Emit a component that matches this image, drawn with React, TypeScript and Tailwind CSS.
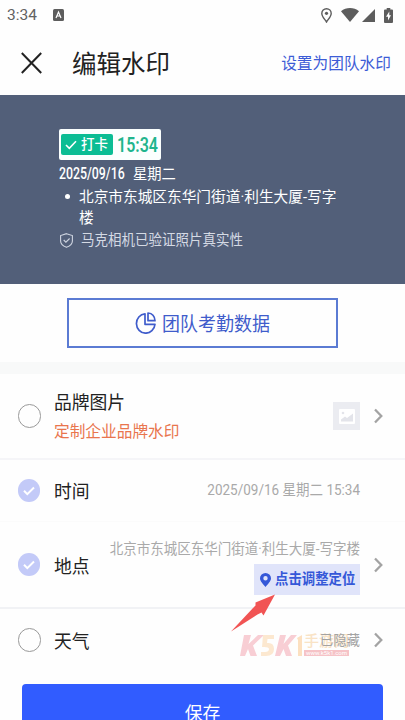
import React from "react";

const CJK = "font-['Roboto','Noto_Sans_CJK_SC',sans-serif]";

function Radio({ checked }: { checked?: boolean }) {
  return checked ? (
    <span className="flex h-[23px] w-[22px] shrink-0 items-center justify-center rounded-full bg-[#c3caf8]">
      <svg width="12" height="10" viewBox="0 0 12 10" fill="none" stroke="#fff" strokeWidth="2">
        <path d="M1 4.8 4.3 8.2 11 1.5" />
      </svg>
    </span>
  ) : (
    <span className="h-6 w-[23px] shrink-0 rounded-full border border-[#999]" />
  );
}

function Chevron() {
  return (
    <svg className="shrink-0" width="9" height="16" viewBox="0 0 9 16" fill="none" stroke="#a3a3a3" strokeWidth="2.3">
      <path d="M1 1.500 7.300 8 1 14.500" />
    </svg>
  );
}

function StatusBar() {
  return (
    <div className="flex h-[30px] items-center pl-[7px] pr-3 text-[15.5px] text-[#626262]">
      <span className="w-[46px] pt-px">3:34</span>
      <svg width="11" height="12" viewBox="0 0 11 12">
        <rect width="11" height="12" rx="1.5" fill="#5d5d5d" />
        <path d="M3 9 5.5 3 8 9M4 7h3" fill="none" stroke="#fff" strokeWidth="1.2" />
      </svg>
      <div className="flex-1" />
      <svg width="11" height="15" viewBox="0 0 11 15" fill="none" stroke="#5d5d5d" strokeWidth="1.4">
        <path d="M5.5 14C3.3 10.7.8 8.2.8 5.4a4.7 4.7 0 0 1 9.4 0c0 2.8-2.5 5.3-4.7 8.6Z" />
        <circle cx="5.5" cy="5.3" r="1.6" fill="#5d5d5d" stroke="none" />
      </svg>
      <svg className="ml-[9px]" width="18" height="14" viewBox="0 0 18 14">
        <path d="M0 3.2C5-1 13-1 18 3.2L9 14Z" fill="#5d5d5d" />
      </svg>
      <svg className="ml-[3px]" width="13" height="13" viewBox="0 0 13 13">
        <path d="M13 0V13H0Z" fill="#5d5d5d" />
      </svg>
      <svg className="ml-[9px]" width="9" height="15" viewBox="0 0 9 15">
        <path d="M2.7 0h3.6v1.5H8q1 0 1 1V14q0 1-1 1H1q-1 0-1-1V2.500q0-1 1-1h1.700Z" fill="#5d5d5d" />
        <path d="M5.300 3.500 2 8.700h2v3.800L7 7.300H5.300Z" fill="#fff" />
      </svg>
    </div>
  );
}

function Preview() {
  return (
    <section className="h-[189px] bg-[#525f79] pl-[59px] pt-[34px] text-white">
      <div className="flex h-[31px] w-[102px] items-center rounded-[2px] bg-[#fbfffe] pl-[2px]">
        <div className="flex h-[21px] w-[52px] shrink-0 items-center rounded-[2px] bg-[#0bbd94] pl-1">
          <svg width="12" height="10" viewBox="0 0 12 10" fill="none" stroke="#fff" strokeWidth="1.6">
            <path d="M1 5 4.300 8.300 11 1.300" />
          </svg>
          <span className="ml-[4px] pt-px text-[13.500px] font-medium leading-none whitespace-nowrap">打卡</span>
        </div>
        <span className="ml-[4px] origin-left scale-x-[0.8] pt-px text-[20px] font-semibold leading-none text-[#1fb58d]">15:34</span>
      </div>
      <div className="mt-[4px] flex h-[20px] items-center leading-none">
        <span className="w-[74px]">
          <span className="inline-block origin-left scale-x-[0.77] text-[16px] font-medium">2025/09/16</span>
        </span>
        <span className="text-[14.300px]">星期二</span>
      </div>
      <div className="mt-[3px] flex text-[14.680px] leading-5">
        <span className="ml-[6px] mr-[9px] mt-[7px] h-[5px] w-[5px] rounded-full bg-white" />
        <span className="w-[270px] origin-top scale-y-[1.03]">北京市东城区东华门街道·利生大厦-写字<br />楼</span>
      </div>
      <div className="mt-[3px] flex h-5 items-center text-[13.500px] leading-none text-[#d5dae4]">
        <svg className="ml-px mr-[8px]" width="13" height="15" viewBox="0 0 13 15" fill="none" stroke="#cfd5e0" strokeWidth="1.100">
          <path d="M6.500.7 12.400 2.600V8c0 3-2.500 5-5.900 6.300C3.100 13 .6 11 .6 8V2.600Z" />
          <path d="m3.700 7 2.200 2.200L9.600 5.500" />
        </svg>
        <span className="scale-y-[1.06] pt-[2px]">马克相机已验证照片真实性</span>
      </div>
    </section>
  );
}

function Arrow() {
  return (
    <svg className="absolute left-[230px] top-[593px]" width="46" height="40" viewBox="0 0 46 40">
      <path d="M1 38.500 23 15 25.500 12.500 25.500 9.500 45 1.500 33.500 22.500 31.500 19.500 27.500 21.500Z" fill="#f15454" />
    </svg>
  );
}

function SiteMark() {
  return (
    <div className="absolute left-[240px] top-[635px] flex h-[22px] w-[110px]">
      <svg width="64" height="22" viewBox="0 0 64 22">
        <path d="M4 0H11L8.500 9 18 0H24L13 10.500 17 21H10.500L8 14 5 21H0Z" fill="#f8ced4" />
        <path d="M23 0H34V4H27.500L27 8Q34 7 34 14 34 21 26 21H21V17H25Q29 17 29 14 29 11.500 22 12Z" fill="#fce8d0" />
        <path d="M40 0H46L43.500 9 51 0H57L48 10.500 52 21H46L43.500 14 40 21H35Z" fill="#f8ced4" />
        <path d="M57 3 62 0V21H58V5Z" fill="#fce0c0" />
      </svg>
      <div className="flex w-[45px] flex-col">
        <span className="h-[15px] whitespace-nowrap text-[15px] font-medium leading-[13px] text-[#f9e3c5]">手游网</span>
        <span className="flex h-[6px] items-center justify-center bg-[#f6c3c7] text-[6px] leading-none text-white">www.k5k1.com</span>
      </div>
    </div>
  );
}

export default function App() {
  return (
    <main className={`relative h-[720px] w-[405px] overflow-hidden bg-[#fefefe] text-[#222] ${CJK}`}>
      <SiteMark />
      <StatusBar />
      <header className="flex h-[65px] items-center pl-[21px] pr-[14px]">
        <svg width="21" height="22" viewBox="0 0 21 22" fill="none" stroke="#222" strokeWidth="2">
          <path d="m.8 1 19.400 20M20.200 1 .8 21" />
        </svg>
        <h1 className="ml-[30px] flex-1 scale-y-[1.04] pt-[5px] text-[24.500px] leading-none">编辑水印</h1>
        <span className="scale-y-[1.05] pt-[2px] text-[15.700px] leading-none text-[#3d5cd6]">设置为团队水印</span>
      </header>
      <Preview />
      <section className="h-[78px] px-[67px] pt-[14px]">
        <button className="flex h-[50px] w-[271px] items-center justify-center border-2 border-[#5b7bd3] text-[18px] leading-none text-[#3f5ccb]">
          <svg className="mr-[6px]" width="21" height="22" viewBox="0 0 21 22" fill="none" stroke="#3f5ccb" strokeWidth="1.700" strokeLinejoin="round">
            <path d="M10 1.800A9.300 9.700 0 1 0 20 12.300H10Z" />
            <path d="M13 1Q19.500 1.500 20 8.700H13Z" />
          </svg>
          <span className="scale-y-[1.06] pt-[4px]">团队考勤数据</span>
        </button>
      </section>
      <div className="h-3 bg-[#f8f9f9]" />
      <section>
        <div className="flex h-[86px] items-center border-b-2 border-[#f5f5f8] pl-[18px] pr-[22px]">
          <Radio />
          <div className="ml-[13px] flex-1 pt-[3px]">
            <div className="scale-y-[1.05] text-[17.800px] leading-7">品牌图片</div>
            <div className="scale-y-[1.05] text-[15.700px] leading-[30px] text-[#e9754d]">定制企业品牌水印</div>
          </div>
          <span className="mr-[14px] flex h-[28px] w-[27px] items-center justify-center bg-[#ebecf1]">
            <svg width="16" height="15" viewBox="0 0 16 15">
              <rect width="16" height="15" rx="1" fill="#fff" />
              <path d="M2 12.500V10.500L6 7.500 8 9 14 4.500V12.500Z" fill="#e3e4ea" />
              <circle cx="4" cy="4" r="1.300" fill="#e3e4ea" />
            </svg>
          </span>
          <Chevron />
        </div>
        <div className="flex h-[62px] items-center border-b border-[#fbfbfb] pl-[18px] pr-[45px]">
          <Radio checked />
          <span className="ml-[14px] flex-1 scale-y-[1.05] pt-[3px] text-[17.800px] leading-none">时间</span>
          <span className="scale-y-[1.1] pt-px text-[13.500px] leading-none text-[#a9a9a9]">2025/09/16 星期二 15:34</span>
        </div>
        <div className="flex h-[87px] items-center border-b-2 border-[#f1f2f5] pl-[18px] pr-[22px]">
          <Radio checked />
          <span className="ml-[14px] scale-y-[1.05] pt-[4px] text-[17.800px] leading-none">地点</span>
          <div className="mr-[14px] flex flex-1 flex-col items-end">
            <span className="scale-y-[1.06] whitespace-nowrap text-[13.500px] leading-[30px] text-[#a9a9a9]">北京市东城区东华门街道·利生大厦-写字楼</span>
            <span className="flex h-[31px] w-[106px] items-center whitespace-nowrap bg-[#e0e4fa] pl-[6px] text-[13.400px] font-bold leading-none text-[#3558d8]">
              <svg className="mr-[4px] shrink-0" width="11" height="14" viewBox="0 0 11 14">
                <path fillRule="evenodd" d="M5.500 14C3.500 11.500 0 8.500 0 5.300a5.500 5.300 0 0 1 11 0c0 3.200-3.500 6.200-5.500 8.700ZM5.500 3.100a2.200 2.200 0 1 0 0 4.400 2.200 2.200 0 0 0 0-4.400Z" fill="#3558d8" />
              </svg>
              <span className="scale-y-[1.07] pt-px">点击调整定位</span>
            </span>
          </div>
          <Chevron />
        </div>
        <div className="flex h-[61px] items-center pl-[18px] pr-[22px]">
          <Radio />
          <span className="ml-[13px] flex-1 scale-y-[1.05] pt-[4px] text-[17.800px] leading-none">天气</span>
          <span className="relative mr-[14px] scale-y-[1.06] pt-[2px] text-[13.400px] leading-none text-[#a3a3a3]">已隐藏</span>
          <Chevron />
        </div>
      </section>
      <button className="mx-[22px] mt-[14px] flex h-[56px] w-[361px] items-center justify-center rounded-[4px] bg-[#315cff] pt-[3px] text-[17.800px] leading-none text-white">
        <span className="scale-y-[1.05]">保存</span>
      </button>
      <Arrow />
    </main>
  );
}
